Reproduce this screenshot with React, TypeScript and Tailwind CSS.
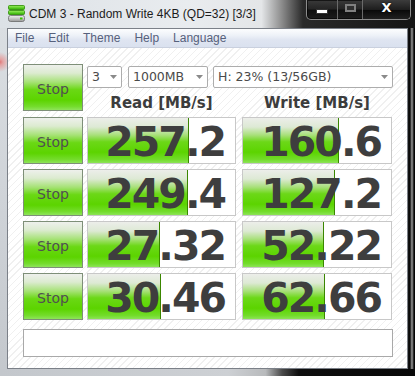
import React from "react";

const rows = [
  { r: "257.2", rw: 101, w: "160.6", ww: 96 },
  { r: "249.4", rw: 100, w: "127.2", ww: 92 },
  { r: "27.32", rw: 72, w: "52.22", ww: 81 },
  { r: "30.46", rw: 73, w: "62.66", ww: 82 },
];

function StopButton() {
  return (
    <div className="w-[60px] h-[47px] shrink-0 border border-[#7e8f78] bg-[linear-gradient(180deg,#eef0ec_0%,#dcebd0_18%,#a6e276_38%,#6ad814_55%,#5cd400_78%,#74dc2c_92%,#8ee45a_100%)] flex items-center justify-center">
      <span className="font-['DejaVu_Sans',sans-serif] text-[14px] leading-none text-[#505050] pt-[3px]">Stop</span>
    </div>
  );
}

function Cell({ value, fill, width }: { value: string; fill: number; width: string }) {
  return (
    <div className={`relative h-[47px] shrink-0 border border-[#c8c8c8] bg-white ${width}`}>
      <div
        className="absolute left-0 top-0 bottom-0 border-r border-[#3a8600] bg-[linear-gradient(180deg,#eceeea_0%,#dde9d4_20%,#a8e07a_38%,#6cd818_53%,#5cd400_76%,#72dc2a_92%,#8ce456_100%)]"
        style={{ width: fill }}
      />
      <div className="relative h-[45px] flex items-center justify-end pr-[10px]">
        <span className="pt-[4px] font-['DejaVu_Sans',sans-serif] font-bold text-[41px] leading-[41px] tracking-[-2px] text-[#3e3e3e]">
          {value}
        </span>
      </div>
    </div>
  );
}

function Dropdown({ label, width }: { label: string; width: string }) {
  return (
    <div className={`h-[22px] ${width} shrink-0 border border-[#adadad] rounded-[2px] bg-white flex items-center justify-between pl-[4px] pr-[4px]`}>
      <span className="font-['DejaVu_Sans',sans-serif] text-[12.5px] leading-none text-[#4a4a4a] whitespace-nowrap">{label}</span>
      <svg width="7" height="4" viewBox="0 0 7 4" className="shrink-0">
        <path d="M0 0 L7 0 L3.5 4 Z" fill="#8a8a8a" />
      </svg>
    </div>
  );
}

export default function App() {
  return (
    <div className="w-[415px] h-[376px] flex flex-col overflow-hidden bg-[#1a1a1a]">
      {/* Title bar */}
      <div className="h-[28px] shrink-0 flex items-start bg-[linear-gradient(90deg,#dce1e6_0%,#e9ecef_45%,#e4e6e8_63%,#8a8a8a_68%,#2a2a2a_73%,#141414_100%)]">
        <svg width="17" height="17" viewBox="0 0 17 17" className="ml-[8px] mt-[5px] shrink-0">
          <defs>
            <linearGradient id="g1" x1="0" y1="0" x2="0" y2="1">
              <stop offset="0" stopColor="#9cf060" />
              <stop offset="1" stopColor="#2fb000" />
            </linearGradient>
            <linearGradient id="g2" x1="0" y1="0" x2="0" y2="1">
              <stop offset="0" stopColor="#f2f2f2" />
              <stop offset="1" stopColor="#9a9a9a" />
            </linearGradient>
          </defs>
          <rect x="0.5" y="0.5" width="16" height="4" rx="1" fill="url(#g1)" stroke="#2a8a00" strokeWidth="0.8" />
          <rect x="0.5" y="5.5" width="16" height="4" rx="1" fill="url(#g1)" stroke="#2a8a00" strokeWidth="0.8" />
          <rect x="0.5" y="10.5" width="16" height="6" rx="2" fill="url(#g2)" stroke="#6a6a6a" strokeWidth="0.8" />
          <rect x="12" y="12.5" width="2.5" height="2" fill="#3cc800" />
        </svg>
        <div className="ml-[4px] mt-[6px] font-['Liberation_Sans',sans-serif] text-[12px] leading-[16px] text-[#1c1c1c] whitespace-nowrap">
          CDM 3 - Random Write 4KB (QD=32) [3/3]
        </div>
        <div className="flex-1" />
        {/* Caption buttons */}
        <div className="mr-[4px] h-[20px] w-[105px] flex border border-t-0 border-[#8c8c8c] rounded-b-[5px] bg-[linear-gradient(180deg,#3a3a3a_0%,#262626_45%,#101010_55%,#1c1c1c_100%)] shadow-[inset_0_0_0_1px_rgba(0,0,0,0.6)]">
          <div className="w-[31px] h-full flex items-center justify-center border-r border-[#6a6a6a]">
            <div className="w-[10px] h-[3px] bg-white border border-[#333] mt-[4px] box-content" />
          </div>
          <div className="w-[25px] h-full flex items-center justify-center border-r border-[#6a6a6a]">
            <div className="w-[11px] h-[8px] border-2 border-[#808080] bg-[#303030] mb-[4px]" />
          </div>
          <div className="flex-1 h-full flex items-center justify-center bg-[linear-gradient(180deg,#3c3c3c_0%,#1e1e1e_50%,#0a0a0a_55%,#202020_100%)] rounded-br-[4px]">
            <span className="font-['DejaVu_Sans',sans-serif] font-bold text-[13px] leading-none text-white mb-[4px] [text-shadow:0_0_2px_#000]">X</span>
          </div>
        </div>
      </div>

      {/* Middle */}
      <div className="h-[341px] shrink-0 flex">
        <div className="w-[7px] shrink-0 bg-[radial-gradient(circle_at_0px_34px,#e07878_0px,#e4a4a4_3px,rgba(228,164,164,0)_10px),linear-gradient(180deg,#dadee2_0%,#cfd3d8_50%,#c4c8cd_100%)]" />
        {/* Client */}
        <div className="w-[401px] shrink-0 border border-[#7b8088] flex flex-col bg-white">
          {/* Menu bar */}
          <div className="h-[19px] shrink-0 flex items-center border-b border-[#c9d0de] bg-[linear-gradient(180deg,#fcfdfe_0%,#eef2f8_35%,#dfe5f1_60%,#dae1ef_100%)] font-['Liberation_Sans',sans-serif] text-[12px] leading-none text-[#56617c]">
            <span className="px-[7px]">File</span>
            <span className="px-[7px]">Edit</span>
            <span className="px-[7px]">Theme</span>
            <span className="px-[7px]">Help</span>
            <span className="px-[7px]">Language</span>
          </div>
          {/* Content */}
          <div className="flex-1 pt-[16px] pl-[15px] flex flex-col bg-[repeating-linear-gradient(135deg,#ffffff_0px,#ffffff_4px,#f0f0f0_4px,#f0f0f0_5px)]">
            <div className="flex flex-col gap-[5px]">
              {/* Row 1 */}
              <div className="flex">
                <StopButton />
                <div className="ml-[4px] flex flex-col">
                  <div className="mt-[2px] flex">
                    <Dropdown label="3" width="w-[35px]" />
                    <div className="w-[6px]" />
                    <Dropdown label="1000MB" width="w-[80px]" />
                    <div className="w-[5px]" />
                    <Dropdown label="H: 23% (13/56GB)" width="w-[180px]" />
                  </div>
                  <div className="mt-[6px] flex font-['DejaVu_Sans',sans-serif] font-bold text-[15px] leading-[18px] text-[#3c3c3c]">
                    <div className="w-[149px] text-center whitespace-nowrap">Read [MB/s]</div>
                    <div className="w-[6px]" />
                    <div className="w-[150px] text-center whitespace-nowrap">Write [MB/s]</div>
                  </div>
                </div>
              </div>
              {rows.map((row, i) => (
                <div key={i} className="flex">
                  <StopButton />
                  <div className="w-[4px] shrink-0" />
                  <Cell value={row.r} fill={row.rw} width="w-[149px]" />
                  <div className="w-[6px] shrink-0" />
                  <Cell value={row.w} fill={row.ww} width="w-[150px]" />
                </div>
              ))}
            </div>
            <div className="mt-[9px] w-[370px] h-[28px] border border-[#a9a9a9] bg-white" />
          </div>
        </div>
        <div className="w-[7px] shrink-0 bg-[linear-gradient(90deg,#151515_0px,#050505_2px,#5a5a5a_3px,#9a9a9a_4px,#4a4a4a_5px,#0a0a0a_6px,#000000_7px)]" />
      </div>

      {/* Bottom frame */}
      <div className="h-[7px] shrink-0 bg-[linear-gradient(90deg,#c3c7cc_0%,#cdd0d4_55%,#b8babc_64%,#4a4a4a_68%,#0e0e0e_72%,#080808_100%)]" />
    </div>
  );
}
